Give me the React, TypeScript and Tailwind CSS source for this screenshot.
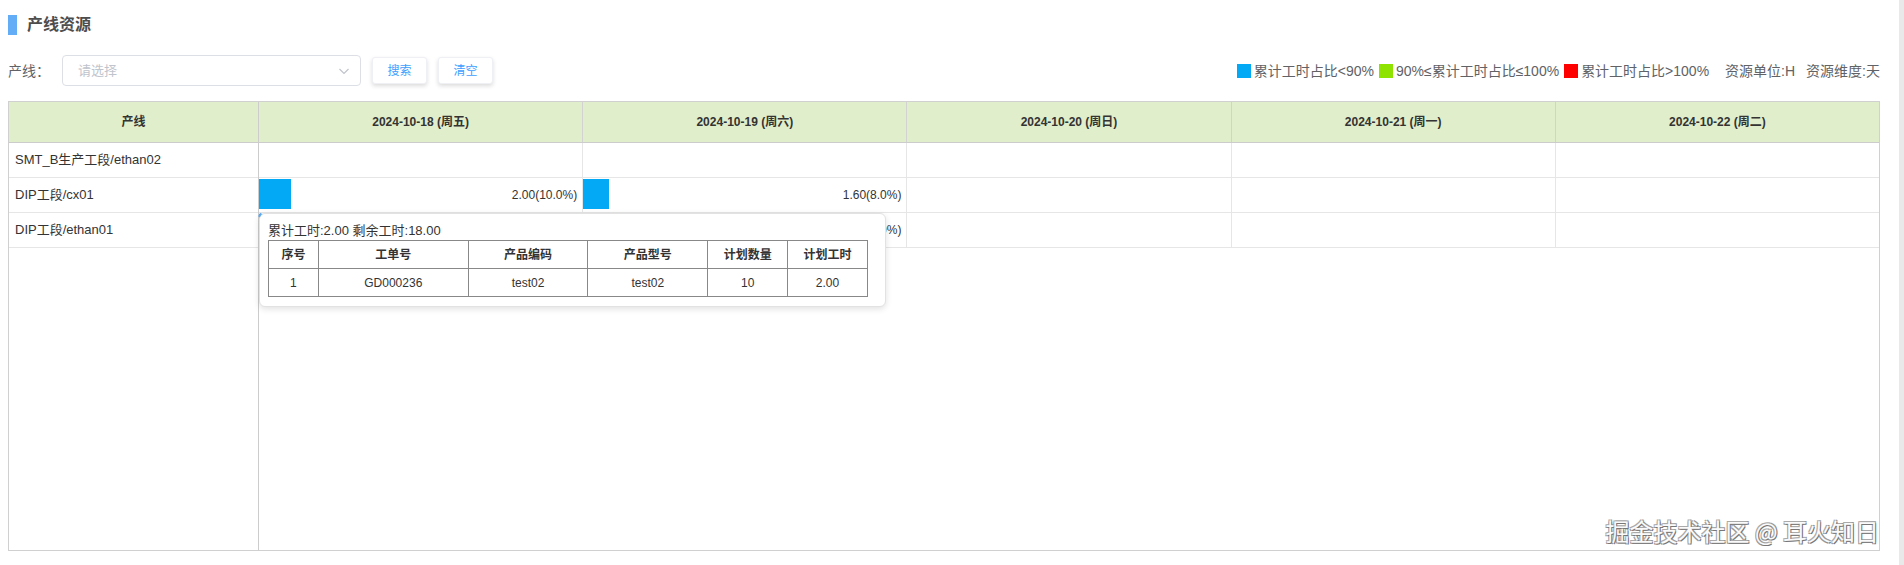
import React from "react";

type Cell = { pct: number; label: string } | null;

const dates = [
  "2024-10-18 (周五)",
  "2024-10-19 (周六)",
  "2024-10-20 (周日)",
  "2024-10-21 (周一)",
  "2024-10-22 (周二)",
];

const rows: { name: string; cells: Cell[] }[] = [
  { name: "SMT_B生产工段/ethan02", cells: [null, null, null, null, null] },
  {
    name: "DIP工段/cx01",
    cells: [
      { pct: 10, label: "2.00(10.0%)" },
      { pct: 8, label: "1.60(8.0%)" },
      null,
      null,
      null,
    ],
  },
  {
    name: "DIP工段/ethan01",
    cells: [
      { pct: 10, label: "2.00(10.0%)" },
      { pct: 8, label: "1.60(8.0%)" },
      null,
      null,
      null,
    ],
  },
];

function Legend({ color, text }: { color: string; text: string }) {
  return (
    <div className="flex items-center">
      <span className={`mr-[3px] h-[14px] w-[14px] ${color}`} />
      <span className="mr-[5px] whitespace-nowrap leading-[20px]">{text}</span>
    </div>
  );
}

export default function App() {
  return (
    <div className="flex h-[565px] w-full bg-white text-[#333] [font-family:'Liberation_Sans','Noto_Sans_CJK_SC',sans-serif]">
      <div className="flex min-w-0 flex-1 flex-col pb-[14px] pl-[8px] pr-[19px] pt-[15px]">
        {/* Title */}
        <div className="flex h-[20px] items-center">
          <span className="h-[20px] w-[9px] bg-[#62adf5]" />
          <span className="ml-[10px] text-[16px] font-bold leading-[20px] text-[#4d4d4d]">
            产线资源
          </span>
        </div>

        {/* Filter row */}
        <div className="mt-[20px] flex h-[31px] items-center justify-between">
          <div className="flex items-center">
            <span className="w-[54px] text-[14px] leading-[20px] text-[#606266]">产线：</span>
            <div className="flex h-[31px] w-[299px] items-center justify-between rounded-[4px] border border-[#dcdfe6] bg-white pl-[15px] pr-[9px]">
              <span className="text-[13px] leading-[20px] text-[#c0c4cc]">请选择</span>
              <svg width="14" height="14" viewBox="0 0 14 14" fill="none">
                <path d="M2.5 5 L7 9.5 L11.5 5" stroke="#c0c4cc" strokeWidth="1.2" />
              </svg>
            </div>
            <button className="ml-[11px] flex h-[27px] w-[55px] items-center justify-center rounded-[3px] border border-[#eef0f4] bg-white text-[12px] text-[#409eff] shadow-[0_2px_4px_rgba(0,0,0,0.14)]">
              搜索
            </button>
            <button className="ml-[11px] flex h-[27px] w-[55px] items-center justify-center rounded-[3px] border border-[#eef0f4] bg-white text-[12px] text-[#409eff] shadow-[0_2px_4px_rgba(0,0,0,0.14)]">
              清空
            </button>
          </div>
          <div className="flex items-center text-[14px] text-[#606266]">
            <Legend color="bg-[#03a9f4]" text="累计工时占比<90%" />
            <Legend color="bg-[#8ee400]" text="90%≤累计工时占比≤100%" />
            <Legend color="bg-[#ff0000]" text="累计工时占比>100%" />
            <span className="ml-[11px] whitespace-nowrap leading-[20px]">资源单位:H</span>
            <span className="ml-[11px] whitespace-nowrap leading-[20px]">资源维度:天</span>
          </div>
        </div>

        {/* Table */}
        <div className="relative mt-[15px] flex min-h-0 flex-1 border border-[#d0d0d0]">
          {/* Fixed left column */}
          <div className="flex w-[250px] shrink-0 flex-col border-r border-[#cccccc]">
            <div className="flex h-[41px] items-center justify-center border-b border-[#cccccc] bg-[#e1eecb] text-[12px] font-bold text-[#333]">
              产线
            </div>
            {rows.map((r) => (
              <div
                key={r.name}
                className="flex h-[35px] items-center border-b border-[#e6e6e6] pl-[6px] text-[13px] text-[#333]"
              >
                {r.name}
              </div>
            ))}
          </div>

          {/* Date area */}
          <div className="relative flex min-w-0 flex-1 flex-col">
            <div className="flex h-[41px] border-b border-[#cccccc] bg-[#e1eecb]">
              {dates.map((d, i) => (
                <div
                  key={d}
                  className={`flex flex-1 items-center justify-center text-[12px] font-bold text-[#333] ${
                    i < dates.length - 1 ? "border-r border-[#d2d2d2]" : ""
                  }`}
                >
                  {d}
                </div>
              ))}
            </div>
            {rows.map((r) => (
              <div key={r.name} className="flex h-[35px] border-b border-[#e6e6e6]">
                {r.cells.map((c, i) => (
                  <div
                    key={i}
                    className={`flex min-w-0 flex-1 items-center ${
                      i < r.cells.length - 1 ? "border-r border-[#e6e6e6]" : ""
                    }`}
                  >
                    {c && (
                      <>
                        <div
                          className="mt-[1px] h-[30px] self-start bg-[#03a9f4]"
                          style={{ width: `${c.pct}%` }}
                        />
                        <span className="ml-auto pr-[5px] text-[12px] text-[#333]">{c.label}</span>
                      </>
                    )}
                  </div>
                ))}
              </div>
            ))}

            {/* Tooltip */}
            <div className="absolute left-0 top-[111px] z-10 w-[627px] rounded-[6px] border border-[#e2e2e2] bg-white pb-[9px] pl-[8px] pt-[8px] shadow-[0_2px_6px_rgba(0,0,0,0.12)]">
              <span className="absolute -left-[1px] -top-[1px] h-[4px] w-[2px] rotate-[30deg] bg-[#5aa9f5]" />
              <div className="text-[13px] leading-[18px] text-[#333]">累计工时:2.00 剩余工时:18.00</div>
              <table className="w-[600px] border-collapse text-[12px] text-[#333]">
                <thead>
                  <tr>
                    <th className="h-[28px] w-[50px] border border-[#888] font-bold">序号</th>
                    <th className="h-[28px] w-[150px] border border-[#888] font-bold">工单号</th>
                    <th className="h-[28px] w-[120px] border border-[#888] font-bold">产品编码</th>
                    <th className="h-[28px] w-[120px] border border-[#888] font-bold">产品型号</th>
                    <th className="h-[28px] w-[80px] border border-[#888] font-bold">计划数量</th>
                    <th className="h-[28px] w-[80px] border border-[#888] font-bold">计划工时</th>
                  </tr>
                </thead>
                <tbody>
                  <tr>
                    <td className="h-[28px] border border-[#888] text-center">1</td>
                    <td className="h-[28px] border border-[#888] text-center">GD000236</td>
                    <td className="h-[28px] border border-[#888] text-center">test02</td>
                    <td className="h-[28px] border border-[#888] text-center">test02</td>
                    <td className="h-[28px] border border-[#888] text-center">10</td>
                    <td className="h-[28px] border border-[#888] text-center">2.00</td>
                  </tr>
                </tbody>
              </table>
            </div>
          </div>

          {/* Watermark */}
          <div className="pointer-events-none absolute bottom-[6px] right-0 z-20 whitespace-nowrap text-[24px] leading-[26px] text-[#fafafa] [font-family:'Noto_Sans_CJK_SC',sans-serif] [text-shadow:1px_1px_0_#777,-1px_-1px_0_#aaa,1px_-1px_0_#999,-1px_1px_0_#999]">
            掘金技术社区 @ 耳火知日
          </div>
        </div>
      </div>
      <div className="w-[5px] shrink-0 bg-[#e9e9e9]" />
    </div>
  );
}
